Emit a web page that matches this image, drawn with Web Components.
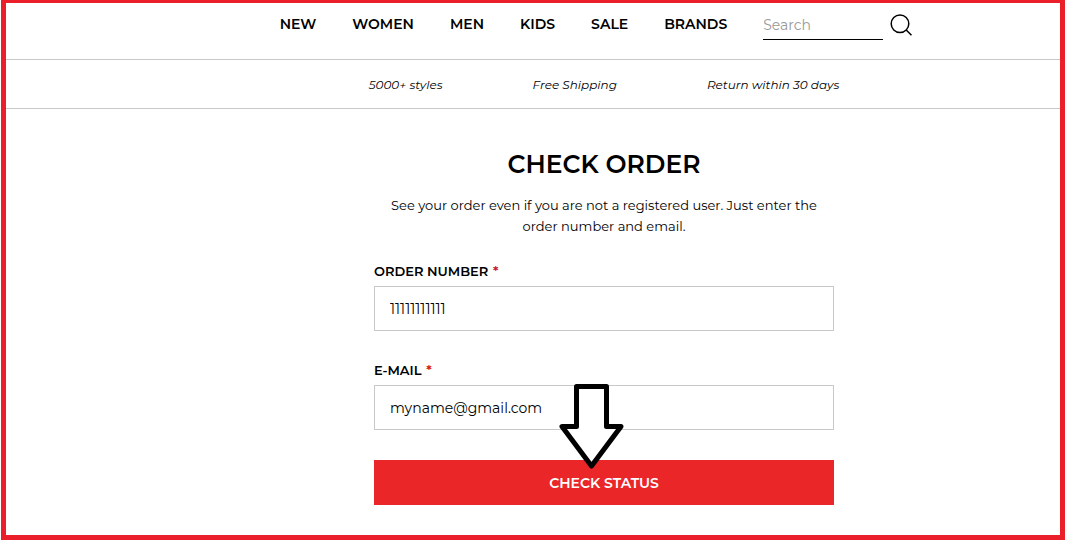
<!DOCTYPE html>
<html lang="en">
<head>
<meta charset="utf-8">
<meta name="viewport" content="width=device-width, initial-scale=1">
<title>Check order</title>
<style>
  body {
    margin: 0;
    background: #fff;
    color: #000;
    font-family: Montserrat, Inter, "Liberation Sans", sans-serif;
    font-size: 13px;
  }
</style>
</head>
<body>
<page-frame>
  <site-header>
    <nav-link href="#new">NEW</nav-link>
    <nav-link href="#women">WOMEN</nav-link>
    <nav-link href="#men">MEN</nav-link>
    <nav-link href="#kids">KIDS</nav-link>
    <nav-link href="#sale">SALE</nav-link>
    <nav-link href="#brands">BRANDS</nav-link>
    <search-box slot="search"></search-box>
  </site-header>
  <info-bar>
    <span>5000+ styles</span>
    <span>Free Shipping</span>
    <span>Return within 30 days</span>
  </info-bar>
  <order-form>
    <span slot="title">CHECK ORDER</span>
    <span slot="intro">See your order even if you are not a registered user. Just enter the order number and email.</span>
    <form-field label="ORDER NUMBER" value="11111111111"></form-field>
    <form-field label="E-MAIL" type="email" value="myname@gmail.com"></form-field>
    <span slot="submit">CHECK STATUS</span>
    <down-arrow slot="pointer"></down-arrow>
  </order-form>
</page-frame>

<script>
// Base: attaches an open root with the markup of render()
class BaseElement extends HTMLElement {
  constructor() {
    super();
    this.attachShadow({ mode: 'open' });
  }

  connectedCallback() {
    this.shadowRoot.innerHTML = this.render();
  }
}

// Red frame around the whole page
class PageFrame extends BaseElement {
  render() {
    return `
      <style>
        :host {
          display: block;
          margin: 0 4px 9px 1px;
          padding-bottom: 30px;
          border: 5px solid #ea1f2a;
          border-top-width: 3px;
        }
      </style>
      <slot></slot>
    `;
  }
}

class SiteHeader extends BaseElement {
  render() {
    return `
      <style>
        :host { display: block; border-bottom: 1px solid #c8c8c8; }
        header {
          display: flex;
          justify-content: center;
          align-items: center;
          gap: 36px;
          height: 42px;
          padding: 0 0 14px 128px;
        }
        nav { display: flex; gap: 36px; }
      </style>
      <header>
        <nav aria-label="Main"><slot></slot></nav>
        <slot name="search"></slot>
      </header>
    `;
  }
}

class NavLink extends BaseElement {
  render() {
    return `
      <style>
        :host { display: block; }
        a {
          color: #000;
          font-size: 14px;
          font-weight: 600;
          line-height: 20px;
          text-decoration: none;
        }
        a:hover { text-decoration: underline; }
      </style>
      <a href="${this.getAttribute('href')}"><slot></slot></a>
    `;
  }
}

class SearchBox extends BaseElement {
  render() {
    return `
      <style>
        :host { display: block; }
        form { display: flex; align-items: center; gap: 7px; }
        input {
          box-sizing: border-box;
          width: 120px;
          height: 32px;
          padding: 2px 0 0;
          border: 0;
          border-bottom: 1px solid #000;
          border-radius: 0;
          outline: none;
          background: none;
          color: #000;
          font: 14px/20px Montserrat, Inter, "Liberation Sans", sans-serif;
        }
        input::placeholder { color: #999; opacity: 1; }
        button {
          display: block;
          padding: 0;
          border: 0;
          background: none;
          cursor: pointer;
        }
        svg { display: block; }
      </style>
      <form role="search">
        <input type="text" placeholder="Search" aria-label="Search">
        <button type="button" aria-label="Submit search">
          <svg width="24" height="24" viewBox="0 0 24 24" fill="none" stroke="#000" stroke-width="1.5">
            <circle cx="10" cy="11.8" r="8.8"/>
            <path d="M16.2 18L21.5 23.3"/>
          </svg>
        </button>
      </form>
    `;
  }
}

class InfoBar extends BaseElement {
  render() {
    return `
      <style>
        :host {
          display: flex;
          justify-content: center;
          align-items: center;
          gap: 90px;
          height: 48px;
          padding-left: 142px;
          border-bottom: 1px solid #c8c8c8;
          font-size: 12px;
          font-style: italic;
        }
      </style>
      <slot></slot>
    `;
  }
}

class OrderForm extends BaseElement {
  render() {
    return `
      <style>
        :host { display: block; padding: 39px 0 0 142px; }
        form { display: block; max-width: 460px; margin: 0 auto; }
        h1 {
          margin: 0 0 15px;
          font-size: 25px;
          font-weight: 600;
          line-height: 32px;
          text-align: center;
        }
        p { margin: 0 0 25px; line-height: 21px; text-align: center; }
        .fields { display: flex; flex-direction: column; gap: 30px; }
        .submit { position: relative; margin-top: 30px; }
        button {
          display: block;
          width: 100%;
          height: 45px;
          padding: 0;
          border: 0;
          background: #ea2629;
          color: #fff;
          font: 600 14px/20px Montserrat, Inter, "Liberation Sans", sans-serif;
          cursor: pointer;
        }
        slot[name="pointer"] {
          display: block;
          position: absolute;
          left: 184px;
          bottom: 35px;
          pointer-events: none;
        }
      </style>
      <main>
        <form>
          <h1><slot name="title"></slot></h1>
          <p><slot name="intro"></slot></p>
          <div class="fields"><slot></slot></div>
          <div class="submit">
            <button type="button"><slot name="submit"></slot></button>
            <slot name="pointer"></slot>
          </div>
        </form>
      </main>
    `;
  }
}

class FormField extends BaseElement {
  render() {
    const type = this.getAttribute('type') || 'text';
    return `
      <style>
        :host { display: block; }
        label {
          display: block;
          margin-bottom: 5px;
          font-weight: 600;
          line-height: 19px;
        }
        .required { margin-left: 1px; color: #d0111b; }
        input {
          display: block;
          box-sizing: border-box;
          width: 100%;
          height: 45px;
          padding: 0 15px;
          border: 1px solid #c8c8c8;
          border-radius: 0;
          background: #fff;
          color: #000;
          font: 14px/20px Montserrat, Inter, "Liberation Sans", sans-serif;
        }
      </style>
      <label for="field">${this.getAttribute('label')} <span class="required">*</span></label>
      <input id="field" type="${type}" value="${this.getAttribute('value') || ''}" required>
    `;
  }
}

// Outlined arrow that points at the submit button
class DownArrow extends BaseElement {
  render() {
    return `
      <style>
        :host { display: block; }
        svg { display: block; }
      </style>
      <svg width="68" height="88" viewBox="0 0 68 88" aria-hidden="true">
        <path d="M18.5 4.5H48.5V44.5H63L33.5 84L4 44.5H18.5Z"
          fill="#fff" stroke="#000" stroke-width="5" stroke-linejoin="round"/>
      </svg>
    `;
  }
}

customElements.define('page-frame', PageFrame);
customElements.define('site-header', SiteHeader);
customElements.define('nav-link', NavLink);
customElements.define('search-box', SearchBox);
customElements.define('info-bar', InfoBar);
customElements.define('order-form', OrderForm);
customElements.define('form-field', FormField);
customElements.define('down-arrow', DownArrow);
</script>
</body>
</html>
